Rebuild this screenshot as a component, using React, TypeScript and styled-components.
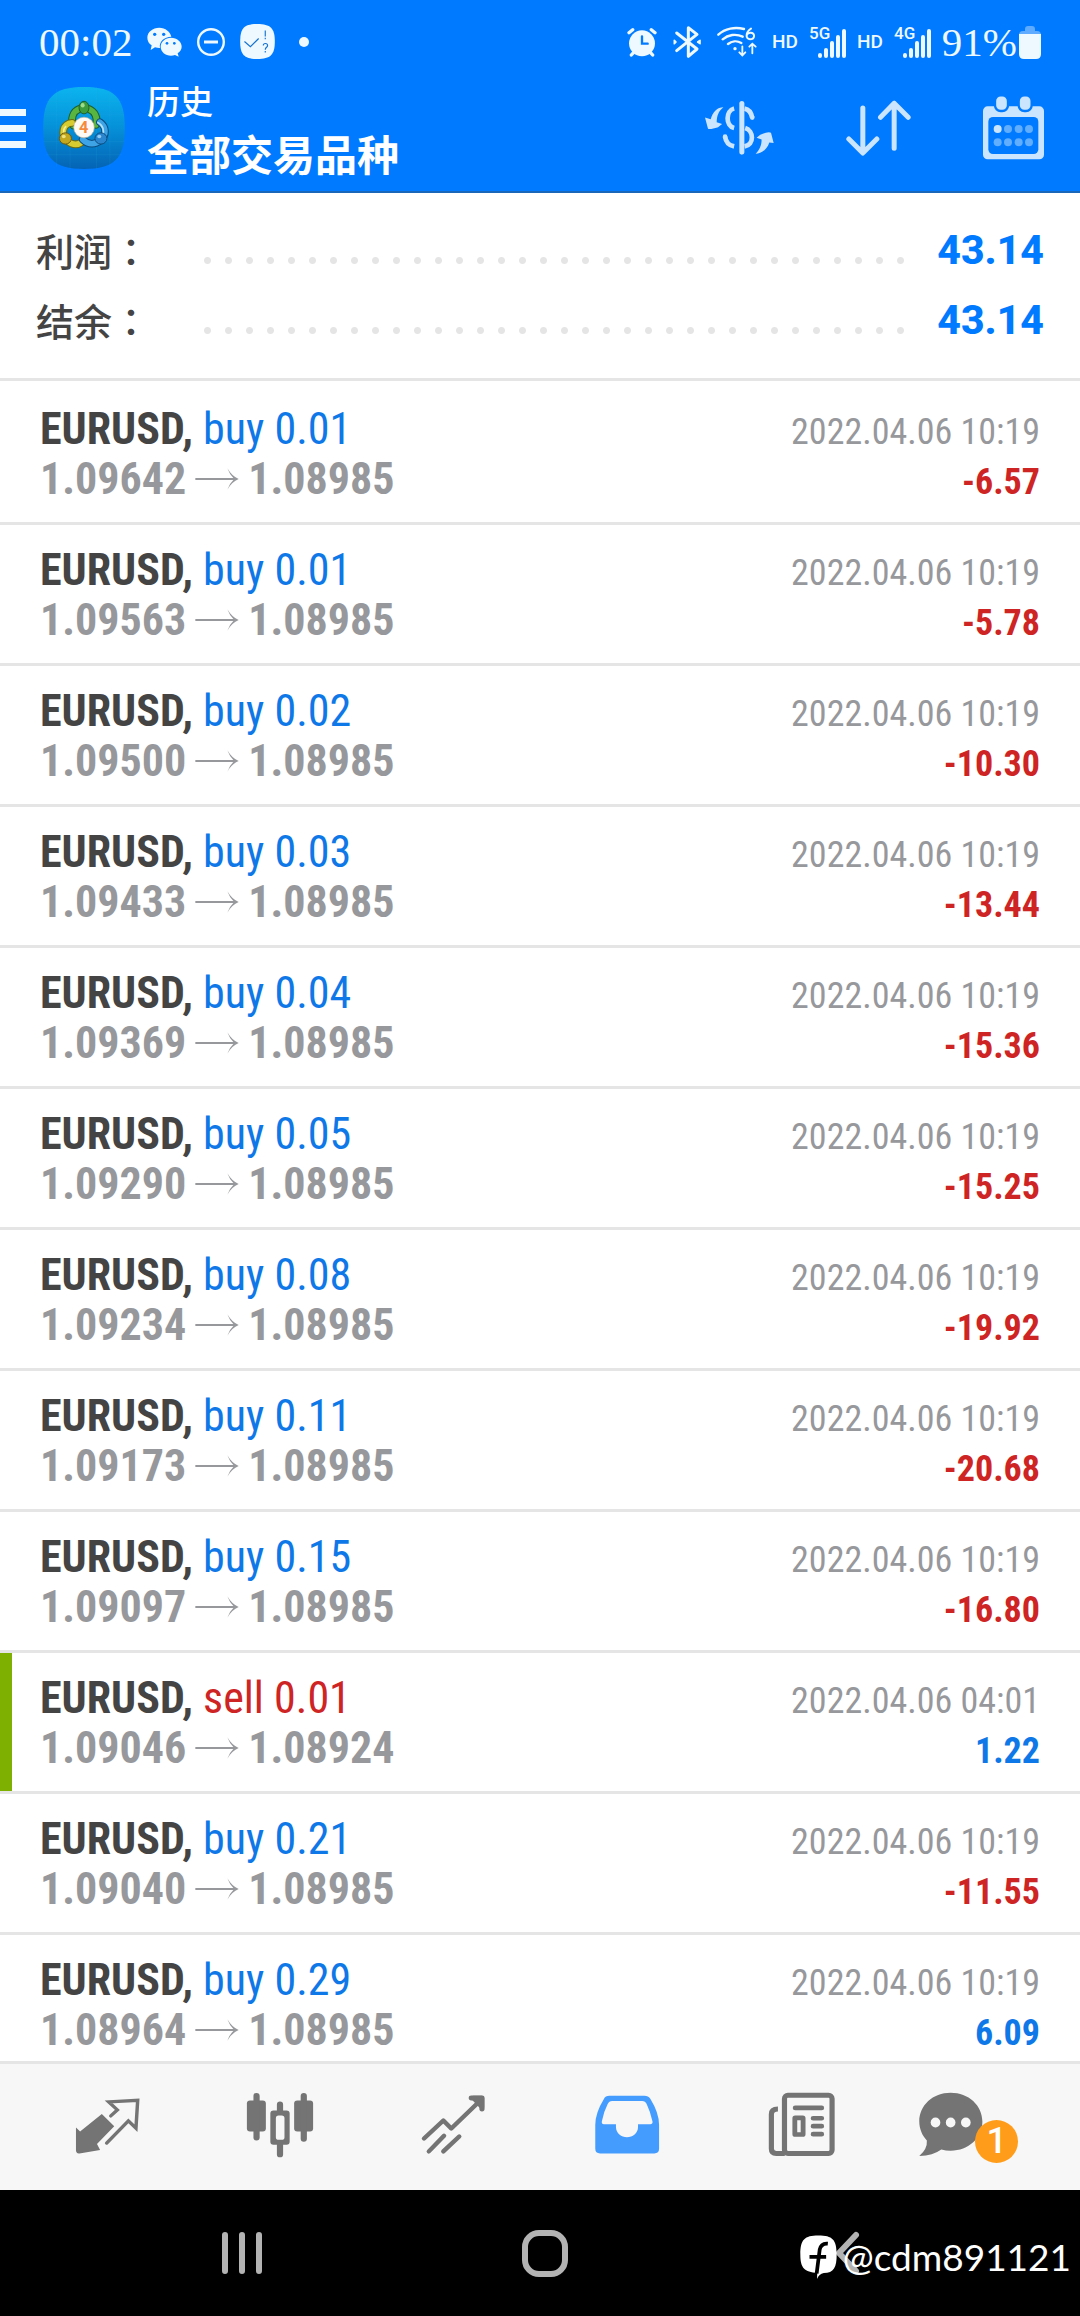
import React from 'react';
import styled, { createGlobalStyle } from 'styled-components';

const CONDENSED = `'Roboto Condensed', 'Liberation Sans Narrow', Roboto, 'Liberation Sans', sans-serif`;
const CJK = `'Noto Sans CJK SC', sans-serif`;

const BLUE = '#007aff';
const TRADE_BLUE = '#0f78e8';
const RED = '#cf2424';
const GREY = '#97989c';
const ICON_GREY = '#747474';
const LINE = '#e5e5e5';

const GlobalStyle = createGlobalStyle`
  * { box-sizing: border-box; }
  body { margin: 0; background: #fff; }
  button { border: 0; padding: 0; background: none; color: inherit; font: inherit; cursor: pointer; }
  svg { display: block; flex: none; }
`;

const Page = styled.div`
  display: flex;
  flex-direction: column;
  height: 100vh;
  overflow: hidden;
  background: #fff;
  color: #444;
  font-family: Roboto, ${CJK};
`;

/* ---------- header ---------- */

const Header = styled.header`
  flex: none;
  padding-bottom: 10px;
  border-bottom: 2px solid #1a66b8;
  background: ${BLUE};
  color: #eef8ff;
`;

const StatusBar = styled.div`
  display: flex;
  align-items: center;
  justify-content: space-between;
  height: 75px;
  padding: 8px 39px 0;
`;

const StatusGroup = styled.div<{ $gap: number }>`
  display: flex;
  align-items: center;
  gap: ${(p) => p.$gap}px;
`;

const StatusText = styled.span`
  font: 400 41px/48px 'Liberation Serif', serif;
`;

const HdText = styled.span`
  font: 500 19px/24px Roboto, sans-serif;
`;

const Dot = styled.span`
  width: 10px;
  height: 10px;
  margin-left: 9px;
  border-radius: 50%;
  background: currentColor;
`;

const TitleRow = styled.div`
  display: flex;
  align-items: center;
  padding-right: 36px;
`;

const MenuButton = styled.button`
  display: flex;
  flex-direction: column;
  gap: 9px;
  width: 26px;
`;

const MenuBar = styled.span`
  height: 7px;
  background: #eef8ff;
`;

const LogoBox = styled.span`
  margin: 0 22px 0 17px;
`;

const Titles = styled.div`
  flex: 1;
  min-width: 0;
  font-family: ${CJK};
  color: #fff;
`;

const Caption = styled.div`
  font-size: 33px;
  font-weight: 500;
  line-height: 50px;
`;

const Title = styled.h1`
  margin: 0;
  font-size: 42px;
  font-weight: 700;
  line-height: 56px;
`;

const Actions = styled.div`
  display: flex;
  align-items: center;
  gap: 72px;
`;

/* ---------- summary ---------- */

const Summary = styled.dl`
  flex: none;
  margin: 0;
  padding: 22px 36px 23px;
  border-bottom: 3px solid ${LINE};
`;

const SummaryRow = styled.div`
  display: flex;
  align-items: center;
  height: 70px;
`;

const SummaryLabel = styled.dt`
  width: 161px;
  font: 500 38px/70px ${CJK};
`;

const Colon = styled.span`
  font-family: 'Noto Sans CJK TC', sans-serif;
`;

const Leader = styled.span`
  flex: 1;
  height: 21px;
  margin: 20px 28px 0 0;
  background: radial-gradient(circle, ${LINE} 3px, transparent 4px) 0 0 / 21px 21px;
`;

const SummaryValue = styled.dd`
  margin: 0;
  color: ${BLUE};
  font: 800 41px/70px Roboto, sans-serif;
`;

/* ---------- deals ---------- */

const DealList = styled.ul`
  flex: 1;
  min-height: 0;
  margin: 0;
  padding: 3px 0 0;
  overflow-y: auto;
  scrollbar-width: none;
  list-style: none;
  font-family: ${CONDENSED};
`;

const Deal = styled.li<{ $marked: boolean }>`
  display: flex;
  justify-content: space-between;
  height: 141px;
  padding: 20px 40px 0;
  border-bottom: 3px solid ${LINE};
  box-shadow: ${(p) => (p.$marked ? 'inset 12px 0 #7db000' : 'none')};
`;

const DealSide = styled.div<{ $end?: boolean }>`
  display: flex;
  flex-direction: column;
  align-items: ${(p) => (p.$end ? 'flex-end' : 'flex-start')};
`;

const Symbol = styled.div`
  color: #444;
  font-size: 44px;
  font-weight: 700;
  line-height: 50px;
`;

const Volume = styled.span<{ $sell: boolean }>`
  color: ${(p) => (p.$sell ? RED : TRADE_BLUE)};
  font-weight: 400;
`;

const Prices = styled.div`
  display: flex;
  align-items: center;
  gap: 9px;
  color: ${GREY};
  font-size: 44px;
  font-weight: 700;
  line-height: 50px;
`;

const DealTime = styled.time`
  color: ${GREY};
  font-size: 36px;
  line-height: 56px;
`;

const Profit = styled.div<{ $loss: boolean }>`
  color: ${(p) => (p.$loss ? RED : TRADE_BLUE)};
  font-size: 36px;
  font-weight: 700;
  line-height: 44px;
`;

/* ---------- bottom bars ---------- */

const TabBar = styled.nav`
  display: grid;
  grid-template-columns: repeat(6, 1fr);
  flex: none;
  height: 129px;
  padding: 0 20px;
  border-top: 3px solid ${LINE};
  background: #f7f7f7;
`;

const Tab = styled.button<{ $active?: boolean }>`
  display: flex;
  align-items: center;
  justify-content: center;
  color: ${(p) => (p.$active ? '#449cff' : ICON_GREY)};
`;

const BadgeAnchor = styled.span`
  position: relative;
  padding-right: 44px;
`;

const Badge = styled.span`
  position: absolute;
  top: 31px;
  left: 64px;
  width: 43px;
  height: 43px;
  border-radius: 50%;
  background: #ff9d1a;
  color: #fff;
  font: 500 36px/43px Roboto, sans-serif;
  text-align: center;
`;

const SystemBar = styled.nav`
  position: relative;
  display: grid;
  grid-template-columns: repeat(3, 1fr);
  flex: none;
  height: 126px;
  padding: 0 80px 0 90px;
  background: #000;
`;

const SystemButton = styled.button`
  display: flex;
  align-items: center;
  justify-content: center;
  color: #b3b3b3;
`;

const Watermark = styled.div`
  position: absolute;
  top: 42px;
  right: 9px;
  display: flex;
  align-items: center;
  gap: 6px;
  color: #fff;
  font: 400 37px/50px Lato, sans-serif;
`;

/* ---------- icons ---------- */

const WeChat = () => (
  <svg width="35" height="30" viewBox="444 76 105 90" fill="currentColor">
    <path d="M481 78c-20 0-36 13-36 30 0 10 5 18 13 23l-3 14 13-8c5 1 9 2 13 2h2c-4-19 13-34 34-34-3-15-18-27-36-27z" />
    <path d="M516 108c-17 0-31 12-31 27s14 27 31 27c4 0 8-1 12-2l11 5-3-10c7-5 12-12 12-20 0-15-14-27-32-27z" />
    <g fill={BLUE}>
      <circle cx="467" cy="98" r="5" /><circle cx="494" cy="98" r="5" />
      <circle cx="504" cy="125" r="4" /><circle cx="526" cy="125" r="4" />
    </g>
  </svg>
);

const MinusCircle = () => (
  <svg width="28" height="28" viewBox="0 0 28 28" fill="none" stroke="currentColor">
    <circle cx="14" cy="14" r="12.8" strokeWidth="2.4" />
    <path d="M7 14h14" strokeWidth="3" />
  </svg>
);

const CheckTile = () => (
  <svg width="35" height="35" viewBox="726 68 105 106">
    <path d="M778 68c40 0 53 13 53 53s-13 53-53 53-52-13-52-53 12-53 52-53z" fill="currentColor" />
    <g fill="none" stroke="#1673cf" strokeWidth="3.5">
      <path d="M739 121l18 16 25-25M802 88v18M802 110v4M796 133c0-8 13-8 13 0 0 6-7 5-7 13M802 150v4" />
    </g>
  </svg>
);

const Alarm = () => (
  <svg width="30" height="30" viewBox="77 76 90 90">
    <circle cx="122" cy="125" r="39" fill="currentColor" />
    <g fill="none" stroke="currentColor" strokeWidth="10" strokeLinecap="round">
      <path d="M83 93l11-9M161 93l-11-9M90 160l7-8M154 160l-7-8" />
    </g>
    <path d="M122 104v22h17" fill="none" stroke={BLUE} strokeWidth="7" strokeLinecap="round" />
  </svg>
);

const Bluetooth = () => (
  <svg width="30" height="34" viewBox="209 71 90 100" fill="none" stroke="currentColor" strokeWidth="9" strokeLinecap="round" strokeLinejoin="round">
    <path d="M223 94l61 48-26 22V78l26 20-61 49" />
    <path d="M216 116v10l5-5zM293 116v10l-7-5z" strokeWidth="5" fill="currentColor" />
  </svg>
);

const Wifi = () => (
  <svg width="40" height="31" viewBox="341 76 120 93" fill="none" stroke="currentColor" strokeWidth="7" strokeLinecap="round">
    <path d="M345 102c20-19 50-24 77-17M358 116c16-14 40-18 60-8M374 130c11-9 27-11 40-3" />
    <circle cx="395" cy="144" r="5" fill="currentColor" stroke="none" />
    <path d="M443 84c-18 12-16 32-3 32 16 0 16-20 2-20-8 0-13 6-12 12" strokeWidth="6" />
    <path d="M417 137v26M408 155l9 9 9-9M447 158v-28M438 138l9-9 10 9" strokeWidth="5.5" />
  </svg>
);

const Signal = ({ label }: { label: string }) => (
  <svg width="37" height="42" viewBox="0 -4 37 42" stroke="currentColor" strokeWidth="4" strokeLinecap="round">
    <text x="0" y="14" fill="currentColor" stroke="none" fontFamily="Roboto, sans-serif" fontSize="17" fontWeight="500">{label}</text>
    <path d="M11 30v1M17 25v6M23 18v13M29 12v19M35 6v25" />
  </svg>
);

const Battery = () => (
  <svg width="22" height="34" viewBox="0 0 22 34">
    <path d="M6 4q0-3 3-3h4q3 0 3 3v2h2q4 0 4 4H0q0-4 4-4h2z" fill="#5eabff" />
    <path d="M0 9h22v20q0 5-5 5H5q-5 0-5-5z" fill="currentColor" />
  </svg>
);

const Logo = () => (
  <svg width="82" height="82" viewBox="129 266 246 247">
    <defs>
      <linearGradient id="tile" x1="0" y1="0" x2="0" y2="1">
        <stop offset="0" stopColor="#0bb4ee" />
        <stop offset="0.5" stopColor="#0590d8" />
        <stop offset="1" stopColor="#0563b4" />
      </linearGradient>
    </defs>
    <path d="M252 266c92 0 123 31 123 123s-31 124-123 124-123-32-123-124 31-123 123-123z" fill="url(#tile)" />
    <path d="M170 272v234M210 266v247M290 266v247M330 270v238M138 310h228M130 350h244M130 430h244M138 470h228" stroke="#3cb6ee" strokeOpacity=".25" strokeWidth="1.5" />
    <g fill="none" strokeLinecap="round">
      <g stroke="#1d5f2c" strokeWidth="23">
        <path d="M220 382c-9-20-2-42 18-50M266 332c20 8 28 28 22 48" />
      </g>
      <path d="M220 382c-9-20-2-42 18-50M266 332c20 8 28 28 22 48" stroke="#58b53f" strokeWidth="17" />
      <path d="M216 374c-28 0-36 36-14 54 14 12 30 14 44 4" stroke="#6d6a10" strokeWidth="23" />
      <path d="M216 374c-28 0-36 36-14 54 14 12 30 14 44 4" stroke="#d8cc30" strokeWidth="17" />
      <path d="M300 372c20 14 20 40 2 54-16 14-36 16-54-2" stroke="#0b4d80" strokeWidth="23" />
      <path d="M300 372c20 14 20 40 2 54-16 14-36 16-54-2" stroke="#3fa4e6" strokeWidth="17" />
    </g>
    <path d="M292 372c18 8 22 26 16 42" fill="none" stroke="#b5e2fb" strokeWidth="5" />
    <path d="M198 384c-8 8-8 20-4 28" fill="none" stroke="#f4f09a" strokeWidth="5" />
    <g strokeWidth="3">
      <ellipse cx="252" cy="328" rx="15" ry="19" fill="#3d9d3c" stroke="#1d5f2c" />
      <ellipse cx="196" cy="421" rx="18" ry="17" fill="#c2a71f" stroke="#6d5a10" />
      <ellipse cx="303" cy="421" rx="18" ry="17" fill="#2c86cf" stroke="#0b4d80" />
    </g>
    <ellipse cx="248" cy="321" rx="6" ry="7" fill="#9fdc8c" />
    <ellipse cx="191" cy="415" rx="6" ry="5" fill="#f0e27c" />
    <ellipse cx="298" cy="415" rx="6" ry="5" fill="#8fcdf5" />
    <circle cx="252" cy="388" r="31" fill="#fdfaf5" stroke="#c9b9a0" strokeWidth="2" />
    <text x="251" y="405" textAnchor="middle" fontFamily="Roboto, sans-serif" fontSize="49" fontWeight="700" fill="#f5893c">4</text>
  </svg>
);

const Currency = () => (
  <svg width="69" height="56" viewBox="318 303 206 166" fill="none" stroke="#cce5ff" strokeWidth="14">
    <path d="M428 313v145" strokeWidth="15" strokeLinecap="round" />
    <path d="M405 328c-26 6-26 52 0 58M436 328c12 2 20 12 23 27M378 412c2 15 12 26 27 29M438 386c26 8 28 50-2 55" />
    <path d="M459 354v1M378 412v1" strokeLinecap="round" />
    <path d="M373 324c-18 0-32 14-38 36l-17-5 9 33q5 4 30-4l12-10-16-5c0-20 6-34 20-45zM469 463c20-2 35-15 41-34l13 2-8-31q-8-5-32 6l-11 9 15 5c0 16-5 30-18 43z" fill="#cce5ff" stroke="none" />
  </svg>
);

const SortArrows = () => (
  <svg width="65" height="56" viewBox="731 304 194 168" fill="none" stroke="#cce5ff" strokeWidth="15" strokeLinecap="round" strokeLinejoin="round">
    <path d="M781 328v134M739 421l42 42 42-42M875 449V314M834 356l41-42 42 42" />
  </svg>
);

const Calendar = () => (
  <svg width="61" height="64" viewBox="1146 290 183 192">
    <rect x="1146" y="321" width="183" height="159" rx="14" fill="#cce5ff" />
    <rect x="1162" y="353" width="150" height="111" rx="14" fill={BLUE} />
    <g fill="#cce5ff" stroke={BLUE} strokeWidth="7">
      <rect x="1182" y="288" width="39" height="47" rx="17" />
      <rect x="1253" y="288" width="39" height="47" rx="17" />
    </g>
    <circle cx="1190" cy="389" r="12" fill="#cce5ff" />
    <g fill="#61adff">
      <circle cx="1221" cy="389" r="12" /><circle cx="1253" cy="389" r="12" /><circle cx="1284" cy="389" r="12" />
      <circle cx="1190" cy="429" r="12" /><circle cx="1221" cy="429" r="12" /><circle cx="1253" cy="429" r="12" /><circle cx="1284" cy="429" r="12" />
    </g>
  </svg>
);

const PriceArrow = () => (
  <svg width="44" height="22" viewBox="582 809 132 66" fill="currentColor">
    <path d="M583 839h114q-12-12-18-29 14 24 34 32-20 8-34 32 6-18 18-29H583z" />
  </svg>
);

const TabIcon = ({ left, children }: { left: number; children: React.ReactNode }) => (
  <svg width="80" height="77" viewBox={`${left} 145 232 232`} preserveAspectRatio="none" fill="currentColor">
    {children}
  </svg>
);

const QuotesIcon = () => (
  <TabIcon left={195}>
    <path d="M296 220l36 37-50 54 9 18-60 10q-10 1-10-10v-68l12 12z" />
    <path d="M322 226l19-18-25-24 84-5-5 84-22-22-63 67" fill="none" stroke="currentColor" strokeWidth="10" strokeLinecap="round" />
  </TabIcon>
);

const ChartIcon = () => (
  <TabIcon left={697}>
    <rect x="717" y="180" width="55" height="93" rx="9" />
    <rect x="736" y="157" width="18" height="143" rx="9" />
    <rect x="854" y="180" width="55" height="93" rx="9" />
    <rect x="873" y="157" width="18" height="147" rx="9" />
    <path d="M804 210v-18a9 9 0 0 1 18 0v18h10q9 0 9 9v85q0 9-9 9h-10v29a9 9 0 0 1-18 0v-29h-10q-9 0-9-9v-85q0-9 9-9zM809 225q-8 0-8 8v57q0 8 8 8h9q8 0 8-8v-57q0-8-8-8z" fillRule="evenodd" />
  </TabIcon>
);

const TradeIcon = () => (
  <TabIcon left={1200}>
    <g fill="none" stroke="currentColor" strokeWidth="13" strokeLinecap="round" strokeLinejoin="round">
      <path d="M1232 294l56-54 23 24 82-82" />
      <path d="M1246 333l44-47M1288 333l46-45" />
      <path d="M1369 172h31v33" strokeWidth="15" />
      <path d="M1375 172l25 27v-27z" fill="currentColor" />
    </g>
  </TabIcon>
);

const HistoryIcon = () => (
  <TabIcon left={137}>
    <path fillRule="evenodd" d="M202 165h101q12 0 18 10 25 42 25 78v72q0 14-14 14H175q-14 0-14-14v-72q0-36 25-78 4-10 16-10zM210 181q-9 0-13 9-12 24-17 53-1 8 6 8h35v8c0 42 64 42 64 0v-8h35q8 0 7-8-6-29-17-53-4-9-13-9z" />
  </TabIcon>
);

const NewsIcon = () => (
  <TabIcon left={639}>
    <g fill="none" stroke="currentColor" strokeWidth="14">
      <rect x="710" y="164" width="138" height="175" rx="10" strokeWidth="15" />
      <path d="M691 205q-19 0-19 16v104q0 14 14 14h25" strokeWidth="15" />
      <path d="M741 202h77" strokeLinecap="round" />
      <rect x="740" y="232" width="24" height="50" rx="1" strokeLinejoin="round" />
      <path d="M793 233h25M793 257h25M793 281h25" strokeLinecap="round" />
    </g>
  </TabIcon>
);

const ChatIcon = () => (
  <TabIcon left={1078}>
    <path d="M1193 156c52 0 92 38 92 87s-40 88-92 88q-14 0-27-4-24 18-64 20 24-22 22-47c-13-14-22-34-22-57 0-49 39-87 91-87z" />
    <g fill="#f7f7f7">
      <ellipse cx="1149" cy="246" rx="14" ry="15" /><ellipse cx="1193" cy="246" rx="14" ry="15" /><ellipse cx="1237" cy="246" rx="14" ry="15" />
    </g>
  </TabIcon>
);

const RecentsIcon = () => (
  <svg width="42" height="44" viewBox="0 0 42 44" stroke="currentColor" strokeWidth="6" strokeLinecap="round">
    <path d="M4 4v36M21 4v36M38 4v36" />
  </svg>
);

const HomeIcon = () => (
  <svg width="46" height="47" viewBox="0 0 46 47" fill="none" stroke="currentColor" strokeWidth="6">
    <rect x="3" y="3" width="40" height="41" rx="14" />
  </svg>
);

const BackIcon = () => (
  <svg width="24" height="44" viewBox="0 0 24 44" fill="none" stroke="currentColor" strokeWidth="6" strokeLinecap="round" strokeLinejoin="round">
    <path d="M20 4L3 22l17 18" />
  </svg>
);

const ForumIcon = () => (
  <svg width="37" height="44" viewBox="752 590 109 129">
    <path d="M806 591c42 0 54 12 54 56 0 38-8 54-38 55q-14 4-20 17l1-18c-38-2-50-14-50-54 0-44 12-56 53-56z" fill="#fff" />
    <path d="M834 615q-20-2-24 18l-9 70M780 654h49" fill="none" stroke="#000" strokeWidth="11" />
  </svg>
);

/* ---------- data ---------- */

type DealData = { side: 'buy' | 'sell'; volume: string; open: string; close: string; time: string; profit: string; marked?: boolean };

const deal = (volume: string, open: string, profit: string): DealData => ({
  side: 'buy', volume, open, close: '1.08985', time: '2022.04.06 10:19', profit,
});

const deals: DealData[] = [
  deal('0.01', '1.09642', '-6.57'),
  deal('0.01', '1.09563', '-5.78'),
  deal('0.02', '1.09500', '-10.30'),
  deal('0.03', '1.09433', '-13.44'),
  deal('0.04', '1.09369', '-15.36'),
  deal('0.05', '1.09290', '-15.25'),
  deal('0.08', '1.09234', '-19.92'),
  deal('0.11', '1.09173', '-20.68'),
  deal('0.15', '1.09097', '-16.80'),
  { side: 'sell', volume: '0.01', open: '1.09046', close: '1.08924', time: '2022.04.06 04:01', profit: '1.22', marked: true },
  deal('0.21', '1.09040', '-11.55'),
  deal('0.29', '1.08964', '6.09'),
];

const totals = [
  { label: '利润', value: '43.14' },
  { label: '结余', value: '43.14' },
];

export default function App() {
  return (
    <Page>
      <GlobalStyle />
      <Header>
        <StatusBar>
          <StatusGroup $gap={15}>
            <StatusText>00:02</StatusText>
            <WeChat />
            <MinusCircle />
            <CheckTile />
            <Dot />
          </StatusGroup>
          <StatusGroup $gap={15}>
            <Alarm />
            <Bluetooth />
            <Wifi />
            <StatusGroup $gap={11}>
              <HdText>HD</HdText>
              <Signal label="5G" />
              <HdText>HD</HdText>
              <Signal label="4G" />
              <StatusGroup $gap={2}>
                <StatusText>91%</StatusText>
                <Battery />
              </StatusGroup>
            </StatusGroup>
          </StatusGroup>
        </StatusBar>
        <TitleRow>
          <MenuButton aria-label="菜单">
            <MenuBar /><MenuBar /><MenuBar />
          </MenuButton>
          <LogoBox><Logo /></LogoBox>
          <Titles>
            <Caption>历史</Caption>
            <Title>全部交易品种</Title>
          </Titles>
          <Actions>
            <button aria-label="货币"><Currency /></button>
            <button aria-label="排序"><SortArrows /></button>
            <button aria-label="日期"><Calendar /></button>
          </Actions>
        </TitleRow>
      </Header>

      <Summary>
        {totals.map((t) => (
          <SummaryRow key={t.label}>
            <SummaryLabel>{t.label}<Colon>：</Colon></SummaryLabel>
            <Leader />
            <SummaryValue>{t.value}</SummaryValue>
          </SummaryRow>
        ))}
      </Summary>

      <DealList>
        {deals.map((d) => (
          <Deal key={d.open} $marked={!!d.marked}>
            <DealSide>
              <Symbol>EURUSD, <Volume $sell={d.side === 'sell'}>{d.side} {d.volume}</Volume></Symbol>
              <Prices><span>{d.open}</span><PriceArrow /><span>{d.close}</span></Prices>
            </DealSide>
            <DealSide $end>
              <DealTime>{d.time}</DealTime>
              <Profit $loss={d.profit.startsWith('-')}>{d.profit}</Profit>
            </DealSide>
          </Deal>
        ))}
      </DealList>

      <TabBar>
        <Tab aria-label="行情"><QuotesIcon /></Tab>
        <Tab aria-label="图表"><ChartIcon /></Tab>
        <Tab aria-label="交易"><TradeIcon /></Tab>
        <Tab aria-label="历史" $active><HistoryIcon /></Tab>
        <Tab aria-label="新闻"><NewsIcon /></Tab>
        <Tab aria-label="消息"><BadgeAnchor><ChatIcon /><Badge>1</Badge></BadgeAnchor></Tab>
      </TabBar>

      <SystemBar>
        <SystemButton aria-label="最近"><RecentsIcon /></SystemButton>
        <SystemButton aria-label="主页"><HomeIcon /></SystemButton>
        <SystemButton aria-label="返回"><BackIcon /></SystemButton>
        <Watermark><ForumIcon />@cdm891121</Watermark>
      </SystemBar>
    </Page>
  );
}
